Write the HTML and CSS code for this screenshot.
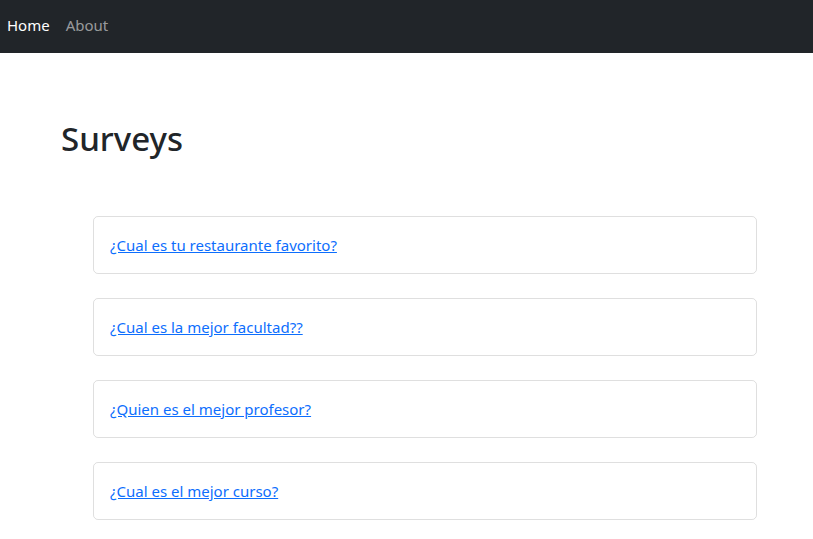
FILE: index.html
```html
<!DOCTYPE html>
<html lang="es">
<head>
<meta charset="utf-8">
<title>Surveys</title>
<link rel="stylesheet" href="styles.css">
</head>
<body>
<nav class="navbar">
  <a class="nav-link active" href="#">Home</a>
  <a class="nav-link" href="#">About</a>
</nav>
<main class="content">
  <h1 class="title">Surveys</h1>
  <div class="list">
    <div class="card"><a href="#">¿Cual es tu restaurante favorito?</a></div>
    <div class="card"><a href="#">¿Cual es la mejor facultad??</a></div>
    <div class="card"><a href="#">¿Quien es el mejor profesor?</a></div>
    <div class="card"><a href="#">¿Cual es el mejor curso?</a></div>
  </div>
</main>
</body>
</html>
```
FILE: styles.css
```css
* { box-sizing: border-box; }
html, body { margin: 0; padding: 0; }
body {
  font-family: "Noto Sans", "Open Sans", sans-serif;
  font-size: 15px;
  line-height: 24px;
  color: #212529;
  background: #fff;
}
.navbar {
  background: #212529;
  height: 53px;
  display: flex;
  align-items: center;
  padding: 0 7px 3px;
  gap: 16px;
}
.nav-link {
  color: rgba(255,255,255,.55);
  text-decoration: none;
  font-size: 15px;
}
.nav-link.active { color: #fff; }
.content {
  padding: 66px 56px 0 61px;
}
.title {
  margin: 0;
  font-size: 33px;
  font-weight: 500;
  line-height: 40px;
}
.list {
  margin: 57px 0 0 32px;
  display: flex;
  flex-direction: column;
  gap: 24px;
}
.card {
  border: 1px solid rgba(0,0,0,.125);
  border-radius: 5px;
  padding: 16px;
}
.card a {
  color: #0d6efd;
  text-decoration: underline;
}
```
